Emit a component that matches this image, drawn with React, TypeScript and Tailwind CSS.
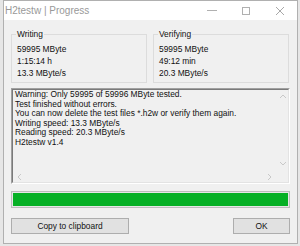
const Chevron = ({ dir }: { dir: "up" | "down" | "left" | "right" }) => {
  const paths: Record<string, string> = {
    up: "M1 5 L4 2 L7 5",
    down: "M1 2 L4 5 L7 2",
    left: "M5 1 L2 4 L5 7",
    right: "M2 1 L5 4 L2 7",
  };
  return (
    <svg width="8" height="8" viewBox="0 0 8 8" className="block">
      <path d={paths[dir]} fill="none" stroke="#c8c8c8" strokeWidth="1" />
    </svg>
  );
};

const GroupBox = ({ title, lines }: { title: string; lines: string[] }) => (
  <div className="relative flex-1 h-[49px] border border-[#dcdcdc] pt-[8px] pl-[5px]">
    <span className="absolute -top-[7px] left-[4px] bg-[#f0f0f0] px-[1px] leading-[12px]">
      {title}
    </span>
    {lines.map((l) => (
      <div key={l} className="leading-[12px] whitespace-nowrap">
        {l}
      </div>
    ))}
  </div>
);

const logLines = [
  "Warning: Only 59995 of 59996 MByte tested.",
  "Test finished without errors.",
  "You can now delete the test files *.h2w or verify them again.",
  "Writing speed: 13.3 MByte/s",
  "Reading speed: 20.3 MByte/s",
  "H2testw v1.4",
];

export default function App() {
  return (
    <div
      className="w-[300px] h-[246px] bg-[#e6e6e6] overflow-hidden text-[8.4px] text-[#111]"
      style={{ fontFamily: '"Liberation Sans", Arial, sans-serif' }}
    >
      <div className="ml-[3px] w-[295px] h-[244px] border border-[#b0b0b0] bg-[#f0f0f0] flex flex-col">
        {/* title bar */}
        <div className="h-[19px] bg-white flex items-center shrink-0">
          <span className="pl-[1px] text-[10px] text-[#999] leading-none">H2testw | Progress</span>
          <div className="ml-auto flex items-center h-full">
            <div className="w-[34px] h-full flex items-center justify-center">
              <div className="w-[10px] h-px bg-[#b0b0b0]" />
            </div>
            <div className="w-[34px] h-full flex items-center justify-center">
              <div className="w-[8px] h-[8px] border border-[#b0b0b0]" />
            </div>
            <div className="w-[34px] h-full flex items-center justify-center">
              <svg width="10" height="10" viewBox="0 0 10 10">
                <path d="M1 1 L9 9 M9 1 L1 9" stroke="#a8a8a8" strokeWidth="1" />
              </svg>
            </div>
          </div>
        </div>

        {/* client area */}
        <div className="flex-1 px-[7px] flex flex-col">
          <div className="mt-[14px] flex gap-[6px] pr-[1px]">
            <GroupBox title="Writing" lines={["59995 MByte", "1:15:14 h", "13.3 MByte/s"]} />
            <GroupBox title="Verifying" lines={["59995 MByte", "49:12 min", "20.3 MByte/s"]} />
          </div>

          {/* log box */}
          <div className="mt-[5px] h-[96px] border border-t-[#a0a0a0] border-l-[#a0a0a0] border-r-white border-b-white">
            <div className="h-full border border-t-[#7a7a7a] border-l-[#7a7a7a] border-r-[#e3e3e3] border-b-[#e3e3e3] grid grid-cols-[1fr_11px] grid-rows-[1fr_11px]">
              <div className="pl-[2px] overflow-hidden">
                {logLines.map((l) => (
                  <div key={l} className="leading-[9.6px] whitespace-nowrap">
                    {l}
                  </div>
                ))}
              </div>
              <div className="flex flex-col items-center justify-between py-[3px]">
                <Chevron dir="up" />
                <Chevron dir="down" />
              </div>
              <div className="flex items-center justify-between px-[3px]">
                <Chevron dir="left" />
                <Chevron dir="right" />
              </div>
              <div />
            </div>
          </div>

          {/* progress */}
          <div className="mt-[7px] h-[17px] border border-[#bcbcbc] bg-[#e6e6e6] p-[1px]">
            <div className="h-full w-full bg-[#06b025]" />
          </div>

          {/* buttons */}
          <div className="mt-[10px] flex justify-between">
            <button className="w-[118px] h-[16px] bg-[#e1e1e1] border border-[#adadad] text-[8.4px] leading-none text-[#111]">
              Copy to clipboard
            </button>
            <button className="w-[57px] h-[16px] bg-[#e1e1e1] border border-[#adadad] text-[8.4px] leading-none text-[#111]">
              OK
            </button>
          </div>
        </div>
      </div>
    </div>
  );
}
